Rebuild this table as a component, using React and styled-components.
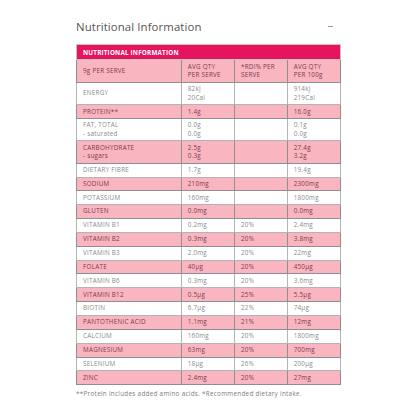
import React from "react";
import styled, { createGlobalStyle } from "styled-components";

const Global = createGlobalStyle`
  html, body { margin: 0; padding: 0; background: #fff; }
  body { font-family: "Open Sans", "Liberation Sans", sans-serif; }
`;

const Page = styled.div`
  width: 416px;
  height: 416px;
  display: flex;
  flex-direction: column;
  align-items: center;
  padding-top: 15px;
  box-sizing: border-box;
`;

const Section = styled.section`
  width: 264px;
  display: flex;
  flex-direction: column;
`;

const TitleBar = styled.div`
  display: flex;
  justify-content: space-between;
  align-items: center;
  height: 22px;
  margin-bottom: 7px;
`;

const Title = styled.h2`
  margin: 0;
  font-family: "Open Sans", sans-serif;
  font-weight: 400;
  font-size: 11.4px;
  color: #555;
  letter-spacing: 0.1px;
`;

const Collapse = styled.span`
  width: 5px;
  height: 1px;
  background: #9a9a9a;
  margin-right: 7px;
`;

const Table = styled.table`
  width: 264px;
  border-collapse: collapse;
  border: 1.5px solid #c4c4c4;
  table-layout: fixed;
  font-family: "Open Sans", sans-serif;
  font-size: 6.3px;
  letter-spacing: 0.25px;
`;

const Row = styled.tr`
  height: ${(p) => p.$h}px;
  background: ${(p) => (p.$pink ? "#f9b6c1" : "#fff")};
  color: ${(p) => (p.$pink ? "#7d3b4b" : "#8a8a8a")};
`;

const Cell = styled.td`
  border: 1px solid ${(p) => (p.$pink ? "#8e8e8e" : "#b4b4b4")};
  padding: 0 6px;
  vertical-align: middle;
  line-height: 8.4px;
  white-space: nowrap;
  overflow: hidden;
`;

const HeadCell = styled.th`
  background: #e8135f;
  color: #fff;
  text-align: left;
  font-weight: 700;
  padding: 0 6px;
  height: 14px;
  border: 1px solid #c4c4c4;
  letter-spacing: 0.2px;
`;

const Foot = styled.p`
  margin: 4px 0 0;
  font-family: "Open Sans", sans-serif;
  font-size: 6.3px;
  color: #7d7d7d;
  letter-spacing: 0.3px;
`;

const rows = [
  { n: ["Energy"], a: ["82kJ", "20Cal"], r: "", c: ["914kJ", "219Cal"] },
  { n: ["Protein**"], a: ["1.4g"], r: "", c: ["16.0g"], pink: true },
  { n: ["Fat, Total", "- saturated"], a: ["0.0g", "0.0g"], r: "", c: ["0.1g", "0.0g"] },
  { n: ["Carbohydrate", "- sugars"], a: ["2.5g", "0.3g"], r: "", c: ["27.4g", "3.2g"], pink: true },
  { n: ["Dietary Fibre"], a: ["1.7g"], r: "", c: ["19.4g"] },
  { n: ["Sodium"], a: ["210mg"], r: "", c: ["2300mg"], pink: true },
  { n: ["Potassium"], a: ["160mg"], r: "", c: ["1800mg"] },
  { n: ["Gluten"], a: ["0.0mg"], r: "", c: ["0.0mg"], pink: true },
  { n: ["Vitamin B1"], a: ["0.2mg"], r: "20%", c: ["2.4mg"] },
  { n: ["Vitamin B2"], a: ["0.3mg"], r: "20%", c: ["3.8mg"], pink: true },
  { n: ["Vitamin B3"], a: ["2.0mg"], r: "20%", c: ["22mg"] },
  { n: ["Folate"], a: ["40µg"], r: "20%", c: ["450µg"], pink: true },
  { n: ["Vitamin B6"], a: ["0.3mg"], r: "20%", c: ["3.6mg"] },
  { n: ["Vitamin B12"], a: ["0.5µg"], r: "25%", c: ["5.5µg"], pink: true },
  { n: ["Biotin"], a: ["6.7µg"], r: "22%", c: ["74µg"] },
  { n: ["Pantothenic Acid"], a: ["1.1mg"], r: "21%", c: ["12mg"], pink: true },
  { n: ["Calcium"], a: ["160mg"], r: "20%", c: ["1800mg"] },
  { n: ["Magnesium"], a: ["63mg"], r: "20%", c: ["700mg"], pink: true },
  { n: ["Selenium"], a: ["18µg"], r: "26%", c: ["200µg"] },
  { n: ["Zinc"], a: ["2.4mg"], r: "20%", c: ["27mg"], pink: true },
];

const Lines = ({ items, upperFirst }) =>
  items.map((t, i) => (
    <React.Fragment key={i}>
      {i > 0 && <br />}
      {upperFirst && i === 0 ? t.toUpperCase() : t}
    </React.Fragment>
  ));

export default function App() {
  return (
    <Page>
      <Global />
      <Section>
        <TitleBar>
          <Title>Nutritional Information</Title>
          <Collapse />
        </TitleBar>
        <Table>
          <colgroup>
            <col style={{ width: "104.7px" }} />
            <col style={{ width: "53.3px" }} />
            <col style={{ width: "52.7px" }} />
            <col style={{ width: "53.3px" }} />
          </colgroup>
          <thead>
            <tr>
              <HeadCell colSpan={4}>NUTRITIONAL INFORMATION</HeadCell>
            </tr>
          </thead>
          <tbody>
            <Row $pink $h={23}>
              <Cell $pink>9g PER SERVE</Cell>
              <Cell $pink>AVG QTY<br />PER SERVE</Cell>
              <Cell $pink>*RDI% PER<br />SERVE</Cell>
              <Cell $pink>AVG QTY<br />PER 100g</Cell>
            </Row>
            {rows.map((r, i) => (
              <Row key={i} $pink={r.pink} $h={r.n.length > 1 || r.a.length > 1 ? 22.3 : 13.85}>
                <Cell $pink={r.pink}>
                  <Lines items={r.n} upperFirst />
                </Cell>
                <Cell $pink={r.pink}>
                  <Lines items={r.a} />
                </Cell>
                <Cell $pink={r.pink}>{r.r}</Cell>
                <Cell $pink={r.pink}>
                  <Lines items={r.c} />
                </Cell>
              </Row>
            ))}
          </tbody>
        </Table>
        <Foot>**Protein includes added amino acids. *Recommended dietary intake.</Foot>
      </Section>
    </Page>
  );
}
